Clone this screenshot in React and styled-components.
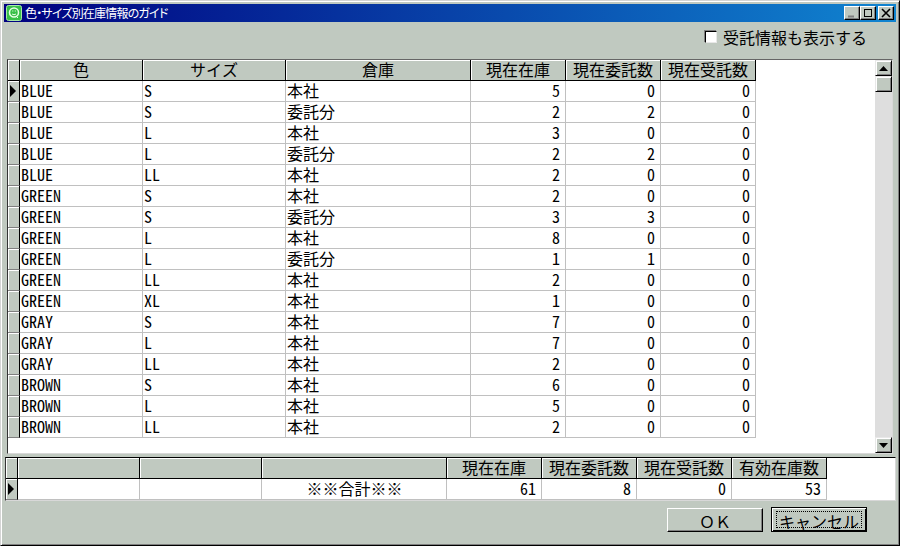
import React from "react";
import styled, { createGlobalStyle } from "styled-components";

const FONT = `"Noto Sans Mono CJK JP", "Noto Sans CJK JP", "Liberation Mono", monospace`;
const face = "#c0c9c0";
const track = "#dedede";

const Global = createGlobalStyle`
  html, body { margin: 0; padding: 0; background: ${face}; }
  * { box-sizing: border-box; }
`;

const Window = styled.div`
  width: 900px;
  height: 546px;
  display: flex;
  flex-direction: column;
  padding: 3px;
  background: ${face};
  border: 1px solid;
  border-color: #d4d4d4 #000 #000 #d4d4d4;
  box-shadow: inset 1px 1px #fff, inset -1px -1px #808080;
  font-family: ${FONT};
  font-size: 16px;
  color: #000;
  overflow: hidden;
`;

const TitleBar = styled.div`
  height: 18px;
  flex: none;
  display: flex;
  align-items: center;
  padding: 0 2px;
  background: linear-gradient(90deg, #000080, #1084d0);
  color: #fff;
`;

const TitleText = styled.span`
  font-family: "Noto Sans CJK JP", sans-serif;
  font-size: 12px;
  line-height: 18px;
  margin-left: 3px;
  letter-spacing: -0.8px;
  font-feature-settings: "palt";
  white-space: nowrap;
`;

const WinButtons = styled.div`
  margin-left: auto;
  display: flex;
  align-items: center;
`;

const WinButton = styled.div`
  width: 16px;
  height: 14px;
  margin-left: ${(p) => (p.$gap ? "2px" : "0")};
  display: flex;
  align-items: center;
  justify-content: center;
  background: ${face};
  border: 1px solid;
  border-color: #fff #000 #000 #fff;
  box-shadow: inset -1px -1px #808080;
`;

const CheckRow = styled.div`
  height: 37px;
  flex: none;
  display: flex;
  align-items: center;
  justify-content: flex-end;
  gap: 6px;
  padding: 0 29px 7px 0;
`;

const CheckBox = styled.span`
  width: 12px;
  height: 12px;
  flex: none;
  background: #fff;
  border: 1px solid;
  border-color: #000 #e8e8e8 #e8e8e8 #000;
  box-shadow: -1px -1px #808080;
`;

const Label = styled.span`
  line-height: 20px;
  white-space: nowrap;
`;

const MainGrid = styled.div`
  position: relative;
  height: 395px;
  margin: 0 3px;
  flex: none;
  background: #fff;
  border: 1px solid;
  border-color: #666 #d8d8d8 #d8d8d8 #333;
`;

const SumGrid = styled.div`
  height: 44px;
  margin: 3px 0 0 1px;
  flex: none;
  background: #fff;
  border: 1px solid;
  border-color: #000 #d8d8d8 #d8d8d8 #333;
`;

const Row = styled.div`
  display: grid;
  grid-template-columns: ${(p) => p.$cols};
  height: 21px;
`;

const Head = styled.div`
  background: ${face};
  border-right: 1px solid #000;
  border-bottom: 1px solid #000;
  box-shadow: inset 1px 1px #fff;
  text-align: center;
  line-height: 19px;
  height: 21px;
  white-space: nowrap;
`;

const Indicator = styled.div`
  background: ${face};
  border-right: 1px solid #000;
  border-bottom: 1px solid #808080;
  box-shadow: inset 1px 1px #fff;
  display: flex;
  align-items: center;
  justify-content: center;
`;

const Cell = styled.div`
  border-right: 1px solid #c0c0c0;
  border-bottom: 1px solid #c0c0c0;
  height: 21px;
  line-height: 19px;
  padding: 0 ${(p) => (p.$align === "right" ? "5px" : "0")} 0 1px;
  text-align: ${(p) => p.$align || "left"};
  white-space: nowrap;
`;

const ScrollBar = styled.div`
  position: absolute;
  top: 0;
  right: 0;
  bottom: 0;
  width: 17px;
  display: flex;
  flex-direction: column;
  background: ${track};
`;

const ScrollBtn = styled.div`
  width: 17px;
  height: 16px;
  flex: none;
  display: flex;
  align-items: center;
  justify-content: center;
  margin-top: ${(p) => (p.$end ? "auto" : "0")};
  background: ${face};
  border: 1px solid;
  border-color: #e8e8e8 #000 #000 #e8e8e8;
  box-shadow: inset 1px 1px #fff, inset -1px -1px #808080;
`;

const Footer = styled.div`
  flex: 1;
  display: flex;
  justify-content: flex-end;
  align-items: flex-start;
  gap: 8px;
  padding: 6px 29px 0 0;
`;

const Button = styled.button`
  width: 96px;
  height: ${(p) => (p.$focus ? "25px" : "24px")};
  margin-top: ${(p) => (p.$focus ? "0" : "1px")};
  padding: ${(p) => (p.$focus ? "0" : "2px 0 0")};
  font: inherit;
  line-height: 20px;
  color: #000;
  background: ${face};
  border: 1px solid;
  border-color: ${(p) => (p.$focus ? "#000" : "#fff #000 #000 #fff")};
  box-shadow: ${(p) => (p.$focus ? "inset 1px 1px #fff, inset -1px -1px #000" : "inset -1px -1px #808080")};
`;

const FocusRing = styled.span`
  display: block;
  margin: 3px 4px;
  height: 17px;
  line-height: 19px;
  border: 1px dotted #000;
`;

const mainCols = "12px 123px 143px 185px 95px 95px 95px";
const sumCols = "12px 122px 122px 185px 95px 95px 95px 95px";

const rows = [
  ["BLUE", "S", "本社", 5, 0, 0],
  ["BLUE", "S", "委託分", 2, 2, 0],
  ["BLUE", "L", "本社", 3, 0, 0],
  ["BLUE", "L", "委託分", 2, 2, 0],
  ["BLUE", "LL", "本社", 2, 0, 0],
  ["GREEN", "S", "本社", 2, 0, 0],
  ["GREEN", "S", "委託分", 3, 3, 0],
  ["GREEN", "L", "本社", 8, 0, 0],
  ["GREEN", "L", "委託分", 1, 1, 0],
  ["GREEN", "LL", "本社", 2, 0, 0],
  ["GREEN", "XL", "本社", 1, 0, 0],
  ["GRAY", "S", "本社", 7, 0, 0],
  ["GRAY", "L", "本社", 7, 0, 0],
  ["GRAY", "LL", "本社", 2, 0, 0],
  ["BROWN", "S", "本社", 6, 0, 0],
  ["BROWN", "L", "本社", 5, 0, 0],
  ["BROWN", "LL", "本社", 2, 0, 0],
];

const Pointer = () => (
  <svg width="7" height="12" viewBox="0 0 7 12"><path d="M0 0 L6 6 L0 12 Z" fill="#000" /></svg>
);
const Up = () => (
  <svg width="9" height="5" viewBox="0 0 9 5"><path d="M4.5 0 L9 5 L0 5 Z" fill="#000" /></svg>
);
const Down = () => (
  <svg width="9" height="5" viewBox="0 0 9 5"><path d="M0 0 L9 0 L4.5 5 Z" fill="#000" /></svg>
);

const AppIcon = () => (
  <svg width="16" height="16" viewBox="0 0 16 16" style={{ flex: "none" }}>
    <rect x="0.5" y="0.5" width="15" height="15" rx="2" fill="#38c048" stroke="#a8e8a8" />
    <circle cx="8" cy="7.5" r="4.5" fill="none" stroke="#e8ffe8" strokeWidth="1.5" />
    <path d="M6 9 Q8 10.5 10 9 M6.3 6 h1 M8.8 6 h1 M10 11 l2 2" fill="none" stroke="#e8ffe8" />
  </svg>
);

export default function App() {
  return (
    <>
      <Global />
      <Window>
        <TitleBar>
          <AppIcon />
          <TitleText>色・サイズ別在庫情報のガイド</TitleText>
          <WinButtons>
            <WinButton>
              <svg width="10" height="10" viewBox="0 0 10 10"><path d="M1 8.5 h6" stroke="#808080" strokeWidth="2" /></svg>
            </WinButton>
            <WinButton>
              <svg width="10" height="10" viewBox="0 0 10 10"><path d="M1 1.5 h8 M1.5 1 v8 M8.5 1 v8 M1 8.5 h8" stroke="#000" fill="none" /></svg>
            </WinButton>
            <WinButton $gap>
              <svg width="10" height="10" viewBox="0 0 10 10"><path d="M1 1 L9 9 M9 1 L1 9" stroke="#000" strokeWidth="1.6" /></svg>
            </WinButton>
          </WinButtons>
        </TitleBar>
        <CheckRow>
          <CheckBox />
          <Label>受託情報も表示する</Label>
        </CheckRow>
        <MainGrid>
          <Row $cols={mainCols}>
            <Head />
            <Head>色</Head>
            <Head>サイズ</Head>
            <Head>倉庫</Head>
            <Head>現在在庫</Head>
            <Head>現在委託数</Head>
            <Head>現在受託数</Head>
          </Row>
          {rows.map((r, i) => (
            <Row key={i} $cols={mainCols}>
              <Indicator>{i === 0 && <Pointer />}</Indicator>
              <Cell>{r[0]}</Cell>
              <Cell>{r[1]}</Cell>
              <Cell>{r[2]}</Cell>
              <Cell $align="right">{r[3]}</Cell>
              <Cell $align="right">{r[4]}</Cell>
              <Cell $align="right">{r[5]}</Cell>
            </Row>
          ))}
          <ScrollBar>
            <ScrollBtn><Up /></ScrollBtn>
            <ScrollBtn />
            <ScrollBtn $end><Down /></ScrollBtn>
          </ScrollBar>
        </MainGrid>
        <SumGrid>
          <Row $cols={sumCols}>
            <Head />
            <Head />
            <Head />
            <Head />
            <Head>現在在庫</Head>
            <Head>現在委託数</Head>
            <Head>現在受託数</Head>
            <Head>有効在庫数</Head>
          </Row>
          <Row $cols={sumCols}>
            <Indicator><Pointer /></Indicator>
            <Cell />
            <Cell />
            <Cell $align="center">※※合計※※</Cell>
            <Cell $align="right">61</Cell>
            <Cell $align="right">8</Cell>
            <Cell $align="right">0</Cell>
            <Cell $align="right">53</Cell>
          </Row>
        </SumGrid>
        <Footer>
          <Button>ＯＫ</Button>
          <Button $focus><FocusRing>キャンセル</FocusRing></Button>
        </Footer>
      </Window>
    </>
  );
}
